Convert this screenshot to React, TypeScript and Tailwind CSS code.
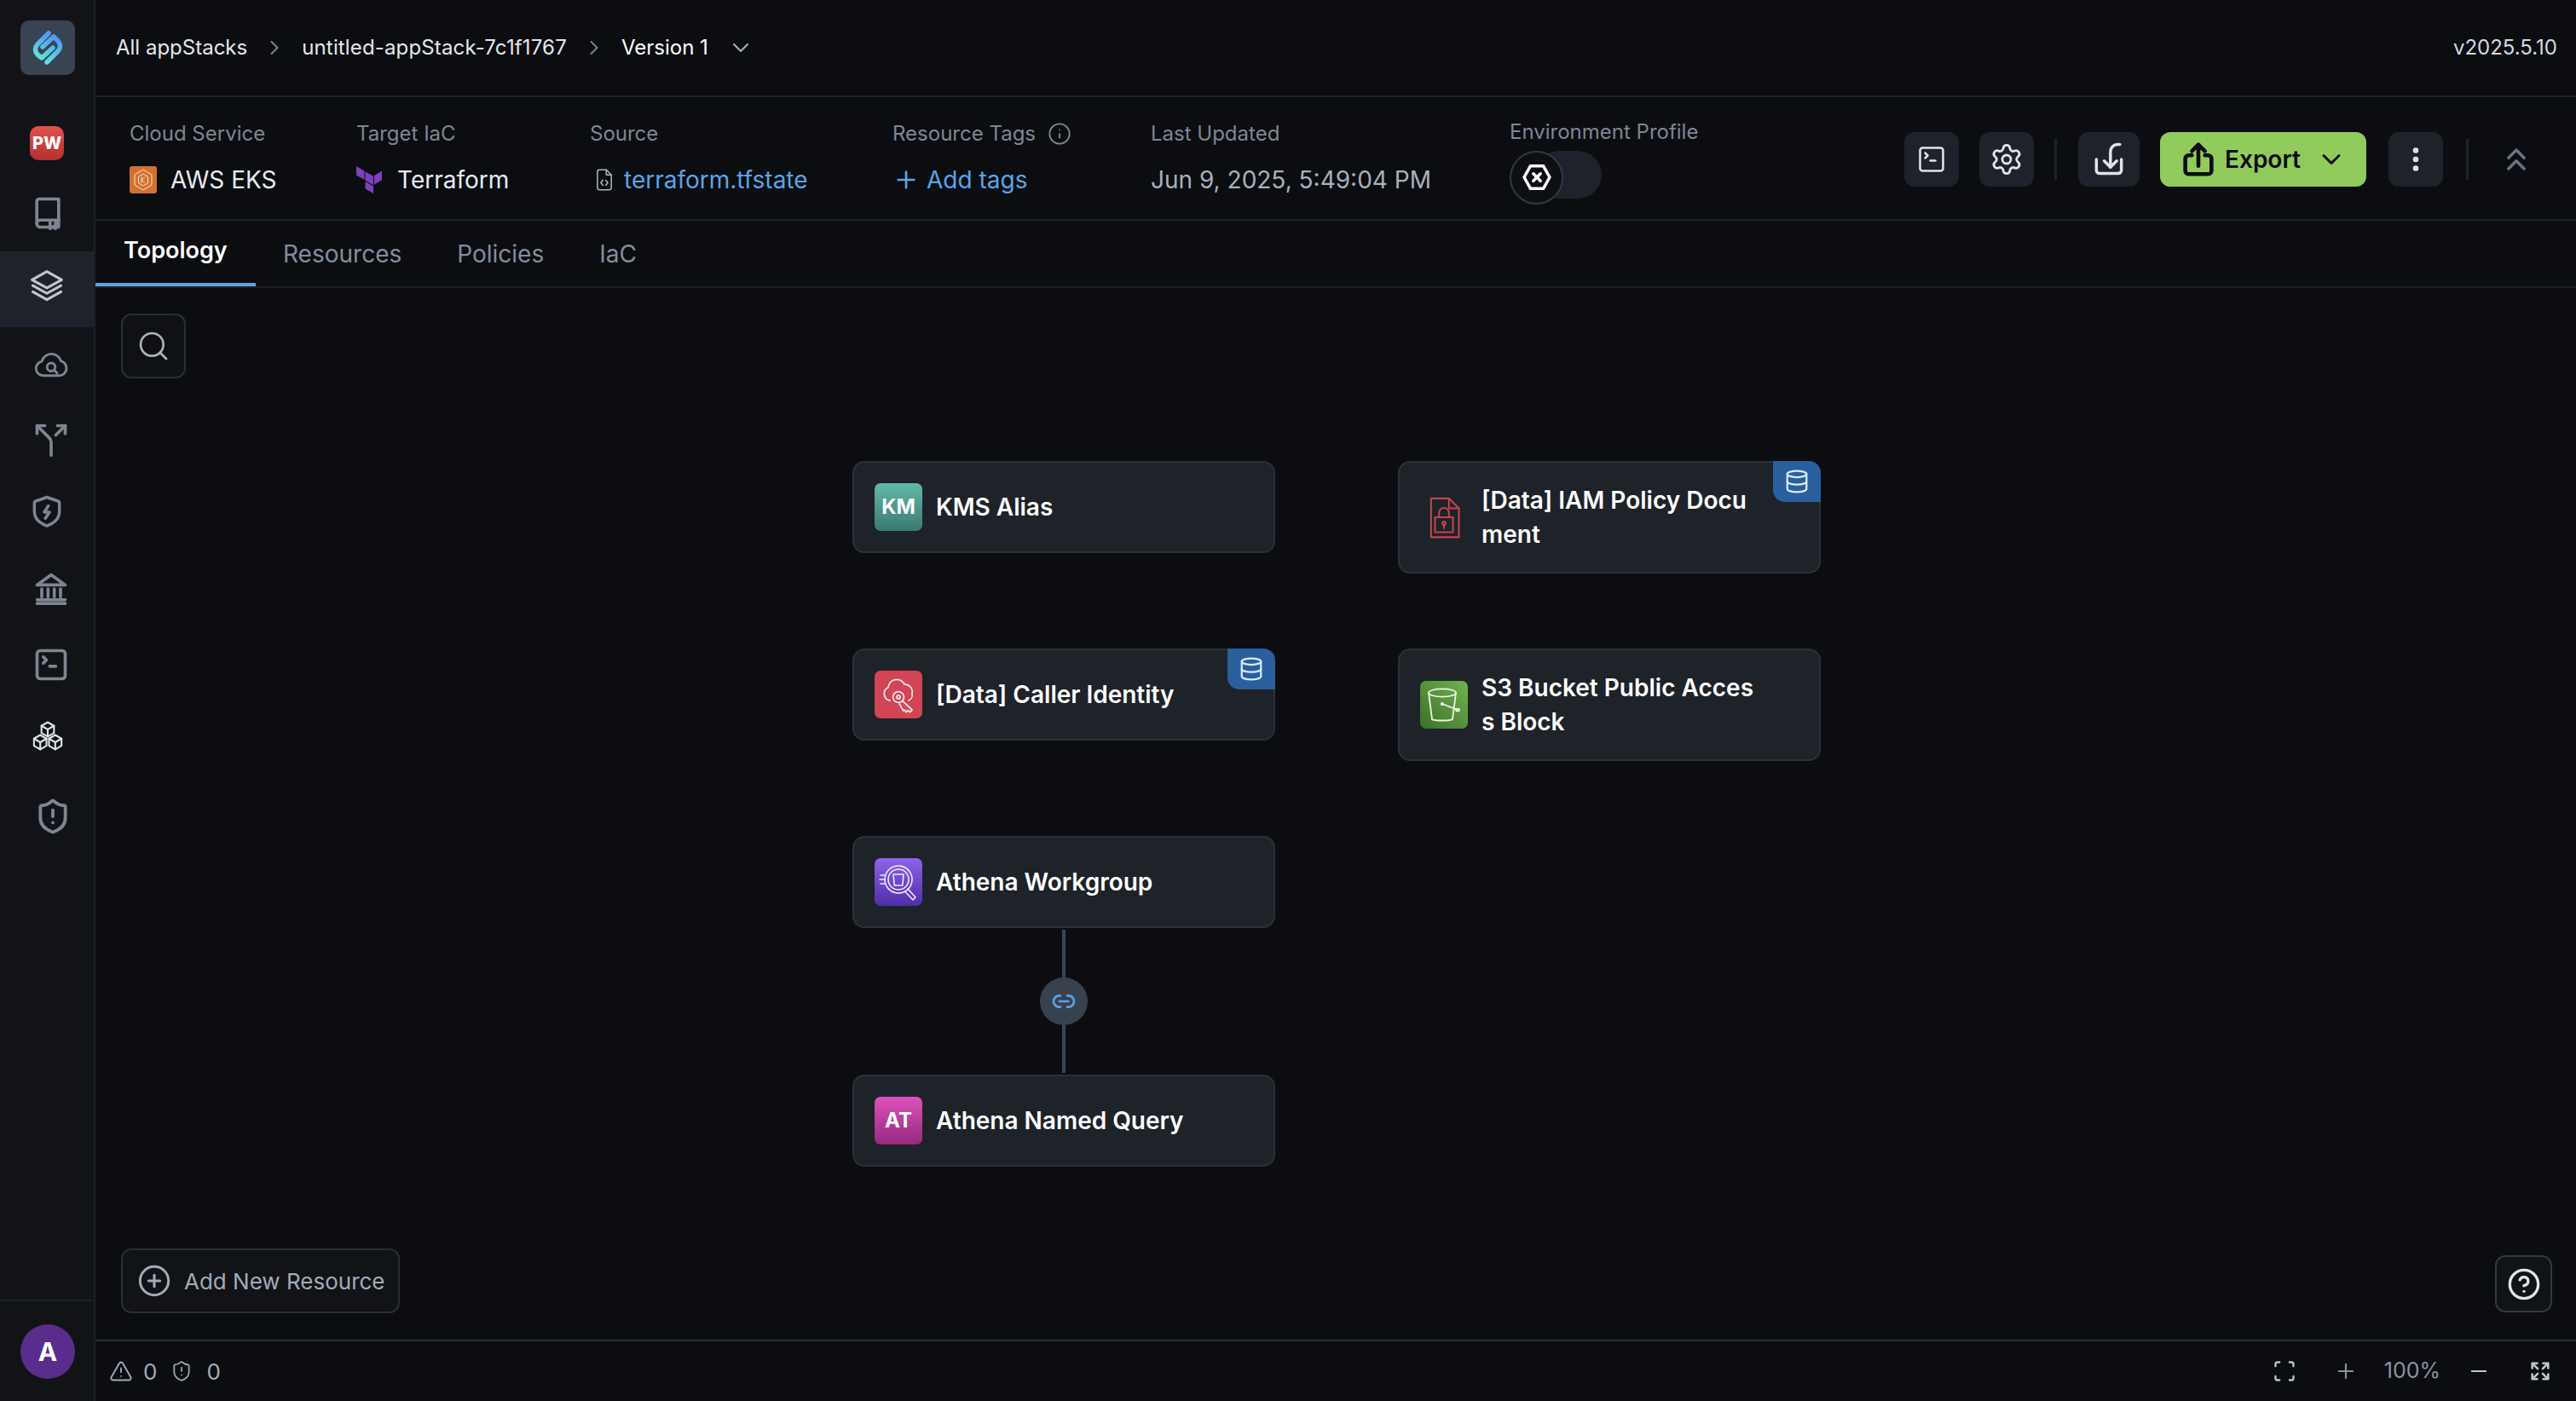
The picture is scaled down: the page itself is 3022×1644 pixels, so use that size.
import type { ReactNode } from 'react'
import {
  ChevronDown,
  ChevronRight,
  ChevronsUp,
  CircleHelp,
  CirclePlus,
  EllipsisVertical,
  Info,
  Minus,
  Plus,
  Scan,
  Search,
  Settings,
  ShieldAlert,
  Split,
  SquareTerminal,
  TriangleAlert,
  Database,
} from 'lucide-react'

function Logo() {
  return (
    <svg viewBox="0 0 64 64" className="h-16 w-16">
      <defs>
        <linearGradient id="logoG" x1="0.5" y1="0" x2="0.2" y2="1">
          <stop offset="0" stopColor="#4d9ff0" />
          <stop offset="1" stopColor="#62e2dc" />
        </linearGradient>
      </defs>
      <g fill="none" stroke="url(#logoG)" strokeWidth="5.5" strokeLinecap="round" strokeLinejoin="round">
        <path d="M33 15 L20 28 Q15 34 20 40 L25 44 L38 32" />
        <path d="M31 49 L44 36 Q49 30 44 24 L39 19 L26 31" />
      </g>
    </svg>
  )
}

function Line({ children, className, width = 2 }: { children: ReactNode; className?: string; width?: number }) {
  return (
    <svg
      viewBox="0 0 24 24"
      fill="none"
      stroke="currentColor"
      strokeWidth={width}
      strokeLinecap="round"
      strokeLinejoin="round"
      className={className}
    >
      {children}
    </svg>
  )
}

function Cube({ x, y }: { x: number; y: number }) {
  const r = 4.6
  const w = r * 0.87
  return (
    <>
      <path
        d={`M${x} ${y - r}L${x + w} ${y - r / 2}V${y + r / 2}L${x} ${y + r}L${x - w} ${y + r / 2}V${y - r / 2}Z`}
      />
      <path d={`M${x - w} ${y - r / 2}L${x} ${y}L${x + w} ${y - r / 2}M${x} ${y}V${y + r}`} />
    </>
  )
}

const sideIcon = 'h-11 w-11'

function SideNav() {
  return (
    <aside className="flex h-full w-[112px] shrink-0 flex-col border-r-2 border-[#1c2026] bg-[#111317] text-[#7d8592]">
      <div className="ml-6 mt-6 h-16 w-16 rounded-[10px] bg-[#3a4353]">
        <Logo />
      </div>
      <div className="ml-[35px] mt-[60px] flex h-10 w-10 items-center justify-center rounded-[10px] bg-gradient-to-b from-[#e0524e] to-[#b5302e] text-[20px] font-extrabold leading-none text-white">
        PW
      </div>
      <div className="ml-[34px] mt-[40px] h-11 w-11">
        <Line className={sideIcon}>
          <path d="M5 18.500V4.500A1.500 1.500 0 0 1 6.500 3H19v18h-2" />
          <path d="M5 18.500a2.300 2.300 0 0 0 2.300 2.500H13M5 18.500A2.300 2.300 0 0 1 7.300 16.500H19" />
          <path d="M13.500 17v5l1.700-1.400L17 22v-5" />
        </Line>
      </div>
      <div className="mt-[23px] flex h-[89px] w-full items-center justify-center bg-[#1e222a] pb-2 text-[#c0c5ce]">
        <Line className={sideIcon} width={1.7}>
          <path d="M12 2.500 21.500 7.800 12 13 2.500 7.800Z" />
          <path d="M3 11.500 12 16.500 21 11.500" />
          <path d="M3 15.500 12 20.500 21 15.500" />
        </Line>
      </div>
      <div className="ml-[38px] mt-[22px] h-11 w-11">
        <Line className={sideIcon} width={1.6}>
          <path d="M7 19a4.600 4.600 0 0 1-1-9.100A6.400 6.400 0 0 1 18.300 9.600 4.800 4.800 0 0 1 17.500 19Z" />
          <circle cx="12" cy="13.500" r="2.600" />
          <path d="m14 15.500 1.800 1.800" />
        </Line>
      </div>
      <div className="ml-[38px] mt-[44px] h-11 w-11">
        <Split className={sideIcon} strokeWidth={2} />
      </div>
      <div className="ml-[33px] mt-[40px] h-11 w-11">
        <Line className={sideIcon} width={1.9}>
          <path d="M12 3 19.500 5.600a1 1 0 0 1 .5.800V12c0 4.400-3.300 7.600-8 9.300-4.700-1.700-8-4.900-8-9.300V6.400a1 1 0 0 1 .5-.8Z" />
          <path d="M13 8.500 10.300 12.500h3.400L11 16.500" />
        </Line>
      </div>
      <div className="ml-[38px] mt-[47px] h-11 w-11">
        <Line className={sideIcon} width={2}>
          <path d="M3 9.500 12 3l9 6.500Z" />
          <path d="M6 12v5M10 12v5M14 12v5M18 12v5" />
          <path d="M3 19h18M3 21.300h18" />
        </Line>
      </div>
      <div className="ml-[38px] mt-[45px] h-11 w-11">
        <SquareTerminal className={sideIcon} strokeWidth={2} />
      </div>
      <div className="ml-[34px] mt-[40px] h-11 w-11 text-[#dfe3ea]">
        <Line className={sideIcon} width={1.15}>
          <Cube x={12} y={7.6} />
          <Cube x={7.2} y={15.8} />
          <Cube x={16.8} y={15.8} />
        </Line>
      </div>
      <div className="ml-[40px] mt-[50px] h-11 w-11">
        <ShieldAlert className={sideIcon} strokeWidth={2.1} />
      </div>
      <div className="mt-auto h-[119px] w-full border-t-2 border-[#1c2026] pl-6 pt-[27px]">
        <div className="flex h-16 w-16 items-center justify-center rounded-full bg-[#5a2d8c] text-[30px] font-bold text-white">
          A
        </div>
      </div>
    </aside>
  )
}

function Breadcrumbs() {
  return (
    <header className="flex h-[114px] shrink-0 items-center justify-between border-b-2 border-[#1c2026] pl-6 pr-[22px] text-[24px] text-[#e5e7eb]">
      <div className="flex items-center">
        <span>All appStacks</span>
        <ChevronRight className="mx-[18px] h-7 w-7 text-[#7d8592]" strokeWidth={1.6} />
        <span className="tracking-[0.15px]">untitled-appStack-7c1f1767</span>
        <ChevronRight className="ml-[18px] mr-[18px] h-7 w-7 text-[#7d8592]" strokeWidth={1.6} />
        <span className="text-white">Version 1</span>
        <ChevronDown className="ml-[22px] h-8 w-8 text-[#a6adb9]" strokeWidth={1.6} />
      </div>
      <span className="text-[#d5d9e0]">v2025.5.10</span>
    </header>
  )
}

function Field({ label, className, children }: { label: ReactNode; className: string; children: ReactNode }) {
  return (
    <div className={className}>
      <div className="flex h-[30px] items-center text-[24px] text-[#7f8794]">{label}</div>
      <div className="mt-[22px] flex h-[34px] items-center text-[28px]">{children}</div>
    </div>
  )
}

function Toolbar() {
  return (
    <div className="ml-auto mt-1 flex items-center">
      <button className="flex h-16 w-16 items-center justify-center rounded-xl bg-[#1e222a] text-[#dfe3ea]">
        <SquareTerminal className="h-9 w-9" strokeWidth={1.7} />
      </button>
      <button className="ml-6 flex h-16 w-16 items-center justify-center rounded-xl bg-[#1e222a] text-[#dfe3ea]">
        <Settings className="h-10 w-10" strokeWidth={1.7} />
      </button>
      <div className="ml-6 h-12 w-[3px] bg-[#1e222a]" />
      <button className="ml-[25px] flex h-16 w-[72px] items-center justify-center rounded-xl bg-[#1e222a] text-[#dfe3ea]">
        <Line className="h-11 w-11" width={1.9}>
          <path d="M4 12v7a2 2 0 0 0 2 2h12a2 2 0 0 0 2-2v-7" />
          <path d="M19 2.500h-1.500A4.500 4.500 0 0 0 13 7v10" />
          <path d="m9 13 4 4 4-4" />
        </Line>
      </button>
      <button className="ml-6 flex h-16 w-[242px] items-center rounded-xl bg-[#90cb5c] pl-[22px] text-[28px] font-semibold text-[#0a0c10]">
        <Line className="h-[46px] w-[46px]" width={2.4}>
          <path d="M8 9.500H6a2 2 0 0 0-2 2V19a2 2 0 0 0 2 2h12a2 2 0 0 0 2-2v-7.500a2 2 0 0 0-2-2h-2" />
          <path d="M12 16V3M8 7l4-4 4 4" />
        </Line>
        <span className="ml-2">Export</span>
        <ChevronDown className="ml-[18px] h-9 w-9" strokeWidth={2} />
      </button>
      <button className="ml-[26px] flex h-16 w-16 items-center justify-center rounded-xl bg-[#1e222a] text-[#dfe3ea]">
        <EllipsisVertical className="h-9 w-9" strokeWidth={2.4} />
      </button>
      <div className="ml-[27px] h-12 w-[3px] bg-[#1e222a]" />
      <div className="ml-[34px] mr-[48px] w-11 text-[#6b7381]">
        <ChevronsUp className="h-11 w-11" strokeWidth={1.9} />
      </div>
    </div>
  )
}

function InfoBar() {
  return (
    <section className="flex h-[145px] shrink-0 items-center border-b-2 border-[#1c2026] pb-[2px] pl-10">
      <Field label="Cloud Service" className="w-[266px] text-[#e8ebf0]">
        <svg viewBox="0 0 32 32" className="h-8 w-8">
          <rect width="32" height="32" rx="3" fill="#d2722f" />
          <g fill="none" stroke="#f7e2d0" strokeWidth="1">
            <path d="M16 4 26 10v12L16 28 6 22V10Z" />
            <path d="M16 9 21.500 12.200v7.600L16 23 10.500 19.800v-7.600Z" />
            <path d="M14 12.500v7M18 12.500 14.500 16l3.500 3.500" />
          </g>
        </svg>
        <span className="ml-4">AWS EKS</span>
      </Field>
      <Field label="Target IaC" className="w-[274px] text-[#e8ebf0]">
        <svg viewBox="0 0 30 32" className="h-8 w-[30px]" fill="#7b42bc">
          <path d="M0 0 9.500 5.500V16L0 10.500Z" />
          <path d="M10.500 6.200 20 11.700v10.600l-9.500-5.500Z" />
          <path d="M30 5.500 21 11v10.500l9-5.300Z" />
          <path d="M10.500 18 20 23.500V32l-9.500-5.500Z" />
        </svg>
        <span className="ml-[18px]">Terraform</span>
      </Field>
      <Field label="Source" className="w-[355px]">
        <Line className="ml-[3px] h-7 w-7 text-[#aeb4bf]" width={1.3}>
          <path d="M14 2H7a2 2 0 0 0-2 2v16a2 2 0 0 0 2 2h10a2 2 0 0 0 2-2V7Z" />
          <path d="M14 2v5h5M10.500 12.500 8.500 15l2 2.500M13.500 12.500l2 2.500-2 2.500" />
        </Line>
        <span className="ml-[9px] text-[#5ba4e6]">terraform.tfstate</span>
      </Field>
      <Field
        label={
          <>
            Resource Tags
            <Info className="ml-[14px] h-7 w-7" strokeWidth={1.6} />
          </>
        }
        className="w-[303px]"
      >
        <span className="flex items-center text-[#5ba4e6]">
          <Plus className="h-8 w-8" strokeWidth={2} />
          <span className="ml-2">Add tags</span>
        </span>
      </Field>
      <Field label="Last Updated" className="w-[421px] text-[#a9b0bc]">
        Jun 9, 2025, 5:49:04 PM
      </Field>
      <div className="mt-[10px]">
        <div className="h-[30px] text-[24px] leading-[30px] text-[#7f8794]">Environment Profile</div>
        <div className="relative mt-[7px] h-[63px] w-[110px]">
          <div className="ml-[30px] mt-1 h-14 w-[78px] rounded-full bg-[#1e222a]" />
          <div className="absolute left-0 top-0 flex h-[63px] w-[63px] items-center justify-center rounded-full border-2 border-[#343841] bg-[#0d0f13]">
            <Line className="h-10 w-10 text-white" width={2.1}>
              <path d="M7.500 4h9L21 12l-4.500 8h-9L3 12Z" />
              <path d="m9.500 9.500 5 5M14.500 9.500l-5 5" />
            </Line>
          </div>
        </div>
      </div>
      <Toolbar />
    </section>
  )
}

function Tabs() {
  return (
    <nav className="flex h-[79px] shrink-0 border-b-2 border-[#1c2026] text-[28px] text-[#848d9c]">
      <div className="flex h-[77px] w-[188px] items-center border-b-4 border-[#5ba4e6] pb-[2px] pl-[33px] text-[27px] font-semibold text-white">
        Topology
      </div>
      <span className="ml-[32px] flex items-center">Resources</span>
      <span className="ml-[65px] flex items-center">Policies</span>
      <span className="ml-[65px] flex items-center">IaC</span>
    </nav>
  )
}

function DataBadge() {
  return (
    <div className="absolute -right-[2px] -top-[2px] flex h-12 w-14 items-center justify-center rounded-bl-[14px] rounded-tr-[14px] bg-[#2a5f9e] text-[#d6e9fb]">
      <Database className="h-[30px] w-[30px]" strokeWidth={1.8} />
    </div>
  )
}

function ResourceNode({
  className,
  icon,
  title,
  data,
}: {
  className: string
  icon: ReactNode
  title: string
  data?: boolean
}) {
  return (
    <div
      className={`absolute flex w-[496px] items-center rounded-[14px] border-2 border-[#2c3038] bg-[#1e2229] pl-6 ${className}`}
    >
      {icon}
      <div className="ml-4 w-[325px] break-all text-[28px] font-semibold leading-[40px] text-white">{title}</div>
      {data ? <DataBadge /> : null}
    </div>
  )
}

function IconTile({ className, children }: { className: string; children: ReactNode }) {
  return (
    <div
      className={`flex h-14 w-14 shrink-0 items-center justify-center rounded-[7px] text-[24px] font-bold text-white ${className}`}
    >
      {children}
    </div>
  )
}

function Canvas() {
  return (
    <main className="relative flex-1">
      <button className="absolute left-[30px] top-[30px] flex h-[76px] w-[76px] items-center justify-center rounded-xl border-2 border-[#2a2e36] bg-[#0f1115] text-[#aeb4bf]">
        <Search className="h-10 w-10" strokeWidth={1.6} />
      </button>

      <ResourceNode
        className="left-[888px] top-[203px] h-[108px]"
        title="KMS Alias"
        icon={<IconTile className="bg-gradient-to-b from-[#62b9a9] to-[#3b7a70]">KM</IconTile>}
      />
      <ResourceNode
        className="left-[888px] top-[423px] h-[108px]"
        title="[Data] Caller Identity"
        data
        icon={
          <IconTile className="bg-[#d14554]">
            <Line className="h-12 w-12 text-[#f9e3e5]" width={0.9}>
              <path d="M7 15.500a4 4 0 0 1-1-7.600 5 5 0 0 1 9.500-1.900 4.500 4.500 0 0 1 4.500 5.500 3.500 3.500 0 0 1-2 4" />
              <circle cx="12" cy="13.500" r="3.200" />
              <circle cx="12" cy="13.500" r="1" />
              <path d="m14.300 15.700 5.700 5.300-1.300 1.300-1.200-1-1 1-1-1.300-.7.5-2.200-4" />
            </Line>
          </IconTile>
        }
      />
      <ResourceNode
        className="left-[888px] top-[643px] h-[108px]"
        title="Athena Workgroup"
        icon={
          <IconTile className="bg-gradient-to-b from-[#8f62ec] to-[#4f2ea8]">
            <Line className="h-12 w-12 text-[#efe8fd]" width={0.8}>
              <circle cx="12" cy="10.500" r="8" strokeDasharray="3 .5" />
              <circle cx="12" cy="10.500" r="6" />
              <path d="M9 7.500h6l-.6 6.500H9.600Z" />
              <path d="M17.500 16 22 21l-1.500 1.500-4.700-5M1.500 8h2.500M1 10.500h3M1.500 13h2.500" />
            </Line>
          </IconTile>
        }
      />
      <ResourceNode
        className="left-[888px] top-[923px] h-[108px]"
        title="Athena Named Query"
        icon={<IconTile className="bg-gradient-to-b from-[#dd52ba] to-[#962a80]">AT</IconTile>}
      />
      <ResourceNode
        className="left-[1528px] top-[203px] h-[132px]"
        title="[Data] IAM Policy Document"
        data
        icon={
          <div className="flex h-14 w-14 shrink-0 items-center justify-center">
            <Line className="h-[62px] w-[62px] text-[#c4424f]" width={0.9}>
              <path d="M14.500 2.500H5.500v19.500h14V7.500Z" />
              <path d="M14.500 2.500v5h5" />
              <rect x="7.500" y="12" width="9" height="7.500" />
              <path d="M9.500 12V9.800a2.500 2.500 0 0 1 5 0V12" />
              <circle cx="12" cy="15" r=".8" />
              <path d="M12 15.800v1.700" />
            </Line>
          </div>
        }
      />
      <ResourceNode
        className="left-[1528px] top-[423px] h-[132px]"
        title="S3 Bucket Public Access Block"
        icon={
          <IconTile className="bg-gradient-to-tr from-[#3a7228] to-[#74b24e]">
            <Line className="h-12 w-12 text-[#eef6e8]" width={0.9}>
              <ellipse cx="11" cy="5" rx="8" ry="2.300" />
              <path d="M3 5 5 20.500c1 1 11 1 12 0L19 5" />
              <circle cx="11" cy="11.500" r=".6" />
              <path d="m11 11.500 9 3.500" />
              <ellipse cx="20" cy="15" rx="1" ry=".7" />
            </Line>
          </IconTile>
        }
      />

      <div className="absolute left-[1134px] top-[753px] h-[168px] w-1 bg-[#3a4556]" />
      <div className="absolute left-[1108px] top-[809px] flex h-14 w-14 items-center justify-center rounded-full bg-[#38424f] text-[#5ba4e6]">
        <Line className="h-8 w-8" width={2}>
          <path d="M9 7H8a5 5 0 0 0 0 10h1M15 7h1a5 5 0 0 1 0 10h-1M8 12h8" />
        </Line>
      </div>

      <button className="absolute left-[30px] top-[1127px] flex h-[76px] w-[327px] items-center rounded-xl border-2 border-[#2a2e36] bg-[#111317] pl-[17px] text-[26px] text-[#a3abb8]">
        <CirclePlus className="h-10 w-10" strokeWidth={1.8} />
        <span className="ml-[15px]">Add New Resource</span>
      </button>
      <button className="absolute left-[2815px] top-[1135px] flex h-[67px] w-[67px] items-center justify-center rounded-xl border-2 border-[#343841] bg-[#111317] text-[#dfe3ea]">
        <CircleHelp className="h-10 w-10" strokeWidth={2} />
      </button>
    </main>
  )
}

function StatusBar() {
  return (
    <footer className="flex h-[72px] shrink-0 items-center border-t-2 border-[#2a2e36] pl-[16px] text-[26px] text-[#a3abb8]">
      <TriangleAlert className="h-7 w-7" strokeWidth={1.6} />
      <span className="ml-3">0</span>
      <ShieldAlert className="ml-4 h-[26px] w-[26px]" strokeWidth={1.6} />
      <span className="ml-[16px]">0</span>
      <div className="ml-auto flex items-center pr-[28px] text-[#8b93a1]">
        <Scan className="h-7 w-7 text-[#c0c5ce]" strokeWidth={2} />
        <Plus className="ml-[44px] h-7 w-7" strokeWidth={1.8} />
        <span className="ml-[31px] text-[25px]">100%</span>
        <Minus className="ml-[31px] h-7 w-7 text-[#c0c5ce]" strokeWidth={1.8} />
        <Line className="ml-[44px] h-7 w-7 text-[#c0c5ce]" width={2.2}>
          <path d="M4 9V4h5M4 4l5.500 5.500M20 9V4h-5M20 4l-5.500 5.500M4 15v5h5M4 20l5.500-5.500M20 15v5h-5M20 20l-5.500-5.500" />
        </Line>
      </div>
    </footer>
  )
}

export default function App() {
  return (
    <div className="flex h-screen w-screen overflow-hidden bg-[#0b0d11] font-[Inter,sans-serif]">
      <SideNav />
      <div className="flex min-w-0 flex-1 flex-col">
        <Breadcrumbs />
        <InfoBar />
        <Tabs />
        <Canvas />
        <StatusBar />
      </div>
    </div>
  )
}
